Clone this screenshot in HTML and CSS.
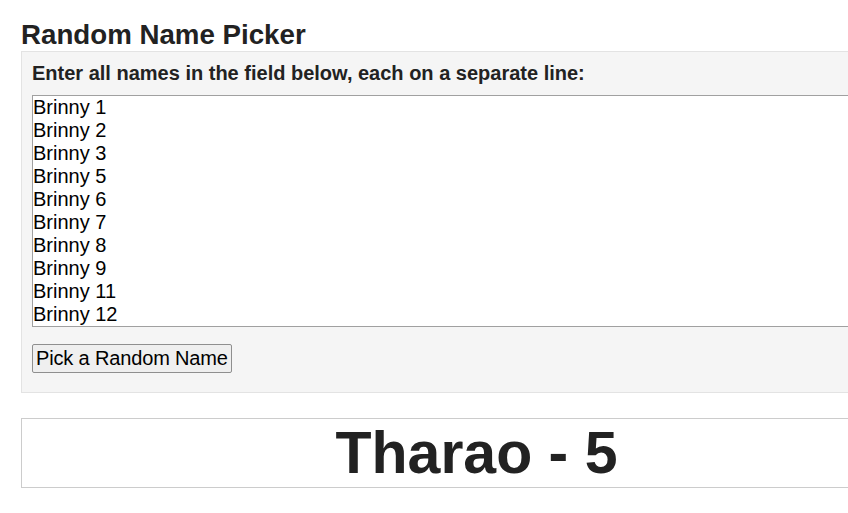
FILE: index.html
```html
<!DOCTYPE html>
<html>
<head>
<meta charset="utf-8">
<link rel="stylesheet" href="styles.css">
</head>
<body>
<div class="page">
  <h1 class="title">Random Name Picker</h1>
  <div class="panel">
    <label class="label" for="names">Enter all names in the field below, each on a separate line:</label>
    <textarea id="names" class="names" rows="10">Brinny 1
Brinny 2
Brinny 3
Brinny 5
Brinny 6
Brinny 7
Brinny 8
Brinny 9
Brinny 11
Brinny 12</textarea>
    <button class="pick">Pick a Random Name</button>
  </div>
  <div class="result">Tharao - 5</div>
</div>
</body>
</html>
```

FILE: styles.css
```css
html, body {
  margin: 0;
  padding: 0;
  overflow: hidden;
  background: #fff;
}
.page {
  width: 911px;
  padding: 0 0 0 21px;
  font-family: "Liberation Sans", Arial, sans-serif;
  color: #222;
}
.title {
  margin: 0;
  padding-top: 19px;
  font-size: 27.7px;
  font-weight: bold;
  line-height: 32px;
}
.panel {
  background: #f5f5f5;
  border: 1px solid #e3e3e3;
  padding: 10px 10px 19px 10px;
  display: flex;
  flex-direction: column;
  align-items: flex-start;
}
.label {
  font-size: 20px;
  font-weight: bold;
  line-height: 23px;
  margin-bottom: 10px;
}
.names {
  width: 100%;
  box-sizing: border-box;
  font-family: "Liberation Sans", Arial, sans-serif;
  font-size: 20px;
  line-height: 23px;
  padding: 0;
  margin: 0;
  border: 1px solid #a0a0a0;
  resize: none;
  color: #000;
  background: #fff;
  overflow: hidden;
}
.pick {
  margin-top: 17px;
  font-family: "Liberation Sans", Arial, sans-serif;
  font-size: 20px;
  line-height: 23px;
  padding: 2px 3px;
  letter-spacing: -0.15px;
  color: #000;
  background: #efefef;
  border: 1px solid #8f8f8f;
  border-radius: 2px;
}
.result {
  margin-top: 25px;
  border: 1px solid #ccc;
  text-align: center;
  font-size: 59px;
  font-weight: bold;
  line-height: 68px;
  color: #222;
}
```
